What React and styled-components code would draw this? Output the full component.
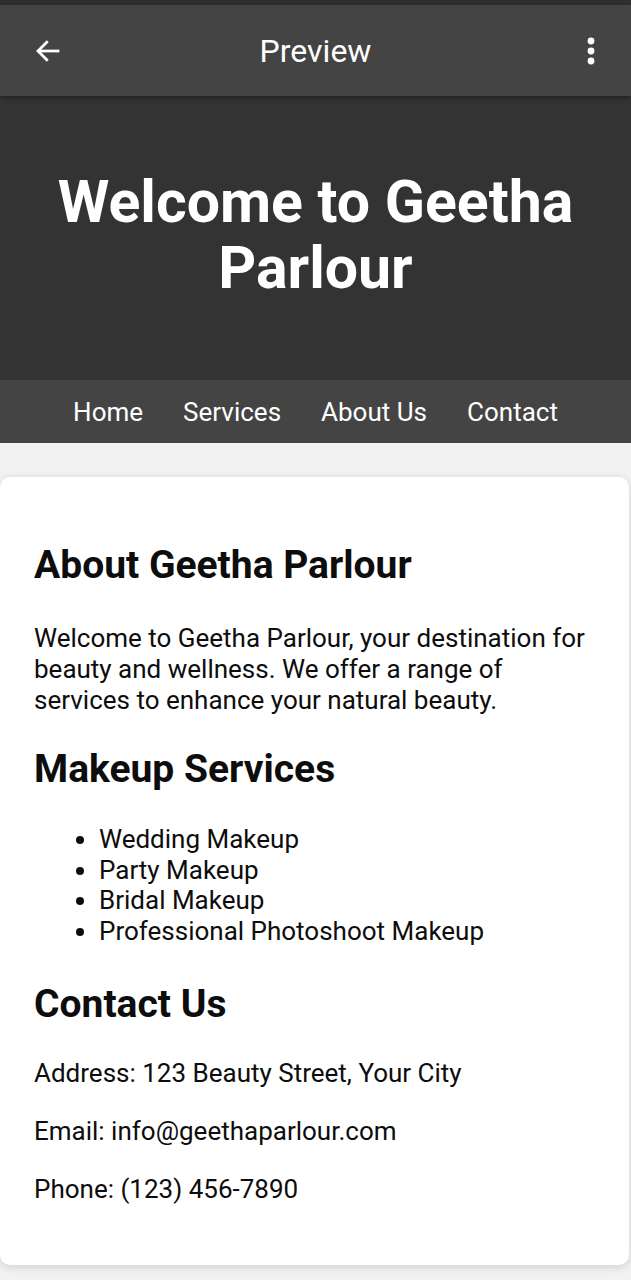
import React from 'react';
import styled, { createGlobalStyle } from 'styled-components';

const GlobalStyle = createGlobalStyle`
  html, body {
    margin: 0;
    padding: 0;
    background: #f2f2f2;
    font-family: Roboto, "Noto Sans", sans-serif;
  }
  * { box-sizing: border-box; }
`;

const Page = styled.div`
  width: 631px;
  min-height: 1280px;
  background: #f2f2f2;
  border-top: 5px solid #2f2f2f;
  display: flex;
  flex-direction: column;
`;

const AppBar = styled.header`
  height: 91px;
  background: #444444;
  display: flex;
  align-items: center;
  justify-content: space-between;
  padding: 0 22px 0 30px;
  color: #fff;
  position: relative;
  z-index: 1;
  box-shadow: 0 2px 5px rgba(0, 0, 0, 0.35);
`;

const BarTitle = styled.h1`
  margin: 0 8px 0 0;
  font-size: 32px;
  font-weight: 400;
`;

const IconButton = styled.button`
  border: 0;
  background: none;
  padding: 0;
  width: 36px;
  height: 36px;
  display: flex;
  align-items: center;
  justify-content: center;
  color: #fff;
`;

const Hero = styled.section`
  background: #333333;
  height: 284px;
  display: flex;
  align-items: center;
  justify-content: center;
  padding: 0 30px 6px;
`;

const HeroTitle = styled.h2`
  margin: 0;
  color: #fff;
  text-align: center;
  font-size: 59px;
  line-height: 66px;
  font-weight: 700;
`;

const Nav = styled.nav`
  background: #444444;
  height: 63px;
  display: flex;
  align-items: center;
  justify-content: center;
  gap: 40px;
  padding-top: 1px;
`;

const NavLink = styled.a`
  color: #fff;
  font-size: 26px;
  text-decoration: none;
`;

const Card = styled.main`
  margin: 34px 2px 15px 0;
  background: #fff;
  border-radius: 10px;
  box-shadow: 0 2px 10px rgba(0, 0, 0, 0.15);
  padding: 65px 34px 60px;
  color: #0d0d0d;
`;

const Heading = styled.h3`
  margin: 0 0 ${p => p.$gap || 35}px;
  font-size: 39px;
  line-height: 46px;
  font-weight: 700;
`;

const Para = styled.p`
  margin: 0 0 ${p => (p.$gap === undefined ? 27 : p.$gap)}px;
  font-size: 26px;
  line-height: 31px;
`;

const List = styled.ul`
  margin: 0 0 35px;
  padding-left: 65px;
  font-size: 26px;
  line-height: 30.5px;
`;

function BackIcon() {
  return (
    <svg width="30" height="30" viewBox="0 0 24 24" fill="none" stroke="#fff" strokeWidth="2.2" strokeLinecap="square">
      <path d="M20 12H5" />
      <path d="M11 5l-7 7 7 7" />
    </svg>
  );
}

function MoreIcon() {
  return (
    <svg width="10" height="28" viewBox="0 0 10 28" fill="#fff">
      <circle cx="5" cy="4" r="3.4" />
      <circle cx="5" cy="14" r="3.4" />
      <circle cx="5" cy="24" r="3.4" />
    </svg>
  );
}

const services = ['Wedding Makeup', 'Party Makeup', 'Bridal Makeup', 'Professional Photoshoot Makeup'];

export default function App() {
  return (
    <Page>
      <GlobalStyle />
      <AppBar>
        <IconButton aria-label="back"><BackIcon /></IconButton>
        <BarTitle>Preview</BarTitle>
        <IconButton aria-label="more"><MoreIcon /></IconButton>
      </AppBar>
      <Hero>
        <HeroTitle>Welcome to Geetha Parlour</HeroTitle>
      </Hero>
      <Nav>
        <NavLink>Home</NavLink>
        <NavLink>Services</NavLink>
        <NavLink>About Us</NavLink>
        <NavLink>Contact</NavLink>
      </Nav>
      <Card>
        <Heading>About Geetha Parlour</Heading>
        <Para $gap={30}>
          Welcome to Geetha Parlour, your destination for beauty and wellness. We offer a range of services to enhance your natural beauty.
        </Para>
        <Heading $gap={32}>Makeup Services</Heading>
        <List>
          {services.map(s => <li key={s}>{s}</li>)}
        </List>
        <Heading $gap={31}>Contact Us</Heading>
        <Para>Address: 123 Beauty Street, Your City</Para>
        <Para>Email: info@geethaparlour.com</Para>
        <Para $gap={0}>Phone: (123) 456-7890</Para>
      </Card>
    </Page>
  );
}
